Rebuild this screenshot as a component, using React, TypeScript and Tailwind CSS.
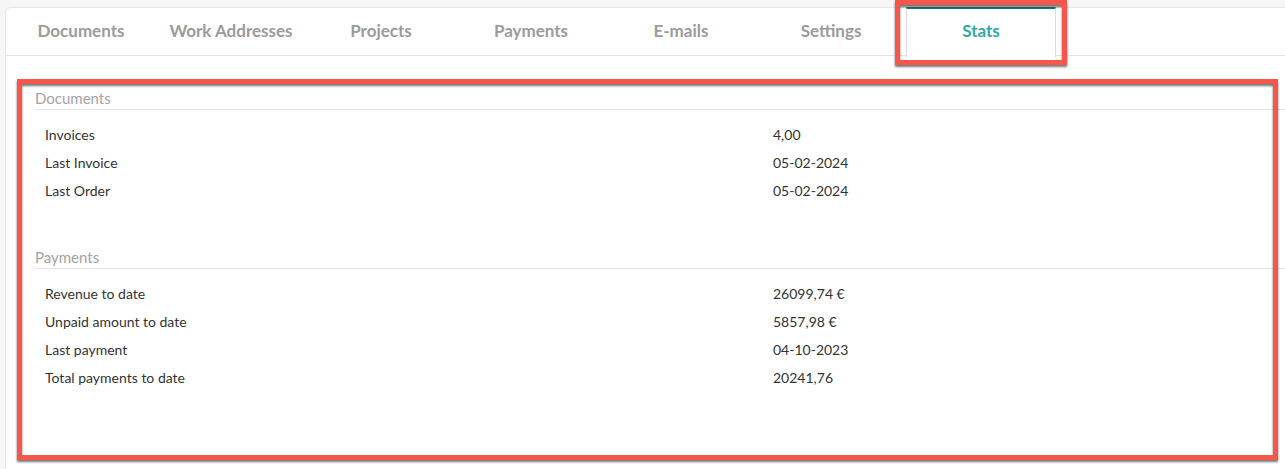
import React from 'react';

const tabs = ['Documents', 'Work Addresses', 'Projects', 'Payments', 'E-mails', 'Settings', 'Stats'];

const sections = [
  {
    title: 'Documents',
    rows: [
      ['Invoices', '4,00'],
      ['Last Invoice', '05-02-2024'],
      ['Last Order', '05-02-2024'],
    ],
  },
  {
    title: 'Payments',
    rows: [
      ['Revenue to date', '26099,74 €'],
      ['Unpaid amount to date', '5857,98 €'],
      ['Last payment', '04-10-2023'],
      ['Total payments to date', '20241,76'],
    ],
  },
];

export default function App() {
  const active = 'Stats';

  return (
    <div className="relative h-[469px] overflow-hidden bg-[#f6f6f6] pl-[5px] pt-[7px] font-['Lato','Liberation_Sans',sans-serif]">
      {/* card */}
      <div className="h-[480px] w-[1300px] rounded-tl-md border border-[#e6e6e6] bg-white">
        {/* tabs */}
        <div className="flex h-[48px] border-b border-[#e3e3e3]">
          {tabs.map(t =>
            t === active ? (
              <div
                key={t}
                className="-mb-px -mt-px flex h-[50px] w-[150px] items-center justify-center border-x border-t-2 border-x-[#dcdcdc] border-t-[#167b80] bg-white pb-[4px] text-[17px] font-bold text-[#2fa8aa]"
              >
                {t}
              </div>
            ) : (
              <div
                key={t}
                className="flex w-[150px] items-center justify-center pb-[2px] text-[17px] font-bold text-[#9b9b9b]"
              >
                {t}
              </div>
            )
          )}
        </div>

        {/* stats */}
        <div className="pl-[29px] pt-[32px]">
          {sections.map((s, i) => (
            <div key={s.title} className={i > 0 ? 'mt-[43px]' : ''}>
              <div className="h-[22px] border-b border-[#e5e5e5] text-[15px] leading-[20px] text-[#a3a3a3]">
                {s.title}
              </div>
              <div className="mt-[10px] pl-[10px]">
                {s.rows.map(([label, value]) => (
                  <div key={label} className="flex h-[28px] items-center text-[14px] text-[#333]">
                    <span className="w-[728px]">{label}</span>
                    <span>{value}</span>
                  </div>
                ))}
              </div>
            </div>
          ))}
        </div>
      </div>

      {/* annotation boxes */}
      <div className="pointer-events-none absolute left-[895px] top-0 h-[65px] w-[172px] border-[5px] border-[#f5574b] [filter:drop-shadow(0_2px_1px_rgba(0,0,0,0.55))]" />
      <div className="pointer-events-none absolute left-[17px] top-[79px] h-[381px] w-[1261px] border-[5px] border-[#f5574b] [filter:drop-shadow(0_2px_1px_rgba(0,0,0,0.55))]" />
    </div>
  );
}
